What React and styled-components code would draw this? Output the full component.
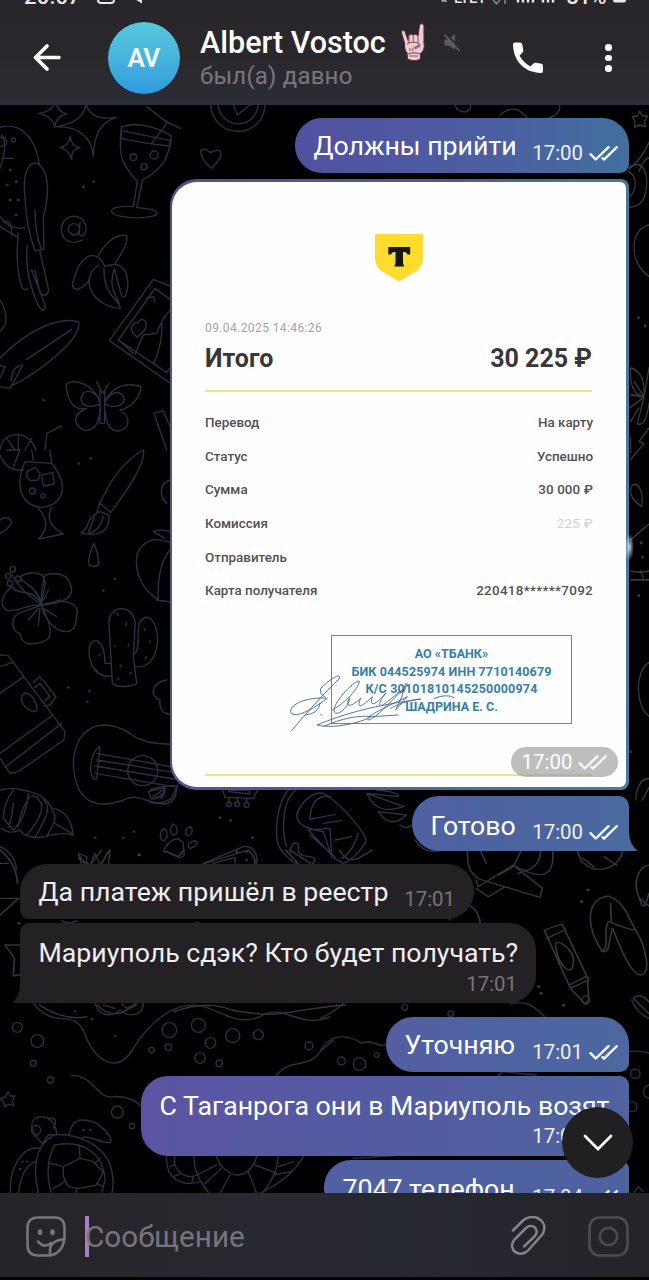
import React from 'react';
import styled, { createGlobalStyle } from 'styled-components';

const Global = createGlobalStyle`
  * { box-sizing: border-box; }
  body { margin: 0; background: #000; }
`;

const Screen = styled.div`
  width: 649px;
  height: 1280px;
  display: flex;
  flex-direction: column;
  background: #000;
  overflow: hidden;
  font-family: Roboto, "Noto Sans", sans-serif;
  white-space: nowrap;
`;

const Top = styled.header`
  height: 105px;
  flex: none;
  display: flex;
  flex-direction: column;
  background: linear-gradient(180deg, #29262a 0%, #28272b 45%, #2c2d35 100%);
  overflow: hidden;
`;

const StatusBar = styled.div`
  height: 6px;
  flex: none;
  display: flex;
  align-items: flex-end;
  justify-content: space-between;
  padding: 0 23px 0 24px;
`;

const StatusGroup = styled.div`
  display: flex;
  align-items: flex-end;
  gap: ${(p) => p.$gap}px;
`;

const StatusText = styled.span`
  font-size: ${(p) => p.$size || 22}px;
  font-weight: 500;
  line-height: 22px;
  height: ${(p) => p.$rise || 20}px;
  letter-spacing: ${(p) => p.$track || 0}px;
  color: ${(p) => p.$color || '#e9e8ec'};
`;

const TitleBar = styled.div`
  display: flex;
  align-items: center;
  height: 99px;
  padding: 5px 0 0 32px;
`;

const Avatar = styled.div`
  width: 72px;
  height: 72px;
  margin: 0 20px 0 46px;
  border-radius: 50%;
  background: linear-gradient(180deg, #55c8dc 0%, #48b4dc 50%, #2f9ae0 100%);
  color: #f4fbff;
  font-size: 26px;
  font-weight: 600;
  letter-spacing: -0.6px;
  padding-right: 1px;
  display: flex;
  align-items: center;
  justify-content: center;
`;

const Peer = styled.div`
  display: flex;
  flex-direction: column;
  width: 312px;
  height: 72px;
  padding-top: 2px;
`;

const PeerName = styled.div`
  display: flex;
  align-items: center;
  height: 37px;
  font-size: 30.5px;
  font-weight: 500;
  color: #fff;
  svg:first-of-type { margin: 0 15px 0 14px; }
`;

const PeerStatus = styled.div`
  font-size: 24px;
  line-height: 31px;
  color: #79787d;
  letter-spacing: 0.2px;
`;

const Dots = styled.div`
  display: flex;
  flex-direction: column;
  gap: 4px;
  margin-left: 61px;
`;

const Dot = styled.i`
  width: 6.5px;
  height: 6.5px;
  border-radius: 50%;
  background: #fff;
`;

const Chat = styled.main`
  position: relative;
  height: 1088px;
  flex: none;
  overflow: hidden;
`;

const Wallpaper = styled.svg`
  position: absolute;
  left: 0;
  top: 0;
`;

const Messages = styled.div`
  position: relative;
  display: flex;
  flex-direction: column;
  padding: 13px 20px 0;
`;

const Bubble = styled.div`
  position: relative;
  align-self: ${(p) => (p.$out ? 'flex-end' : 'flex-start')};
  width: ${(p) => p.$w}px;
  height: ${(p) => p.$h || 55}px;
  margin-bottom: ${(p) => p.$gap}px;
  padding: 0 ${(p) => (p.$out ? 11 : 19)}px 0 18.5px;
  border-radius: ${(p) => p.$radius};
  background: ${(p) => p.$bg || '#242125'};
  display: flex;
  justify-content: ${(p) => (p.$stacked ? 'flex-start' : 'space-between')};
  flex-direction: ${(p) => (p.$stacked ? 'column' : 'row')};
`;

const MessageText = styled.div`
  font-size: 26.7px;
  line-height: 54px;
  height: ${(p) => (p.$stacked ? 42 : 54)}px;
  padding-top: ${(p) => p.$drop || 0}px;
  color: ${(p) => (p.$out ? '#fff' : '#efeef1')};
`;

const Meta = styled.div`
  display: flex;
  align-items: center;
  justify-content: flex-end;
  gap: 6px;
  height: 24px;
  margin-top: ${(p) => p.$top ?? 23}px;
  font-size: 20.4px;
  color: ${(p) => (p.$out ? '#eef0fa' : '#77747a')};
`;

const Tail = styled.svg`
  position: absolute;
  bottom: 0;
  ${(p) => (p.$side === 'right' ? 'right: -9px;' : 'left: -8px;')}
`;

const Photo = styled.div`
  position: relative;
  align-self: flex-end;
  width: 459px;
  height: 611px;
  margin-bottom: 6px;
  padding: 3px 3px 3px 2px;
  border-radius: 27px 8px 8px 27px;
  background: linear-gradient(100deg, #54508f 0%, #4f5c93 50%, #477690 72%, #4d7ba0 100%);
`;

const Glint = styled.i`
  position: absolute;
  right: -5px;
  top: 354px;
  width: 9px;
  height: 28px;
  border-radius: 50%;
  background: radial-gradient(closest-side, rgba(235, 242, 250, 0.85), rgba(235, 242, 250, 0));
`;

const Receipt = styled.div`
  height: 605px;
  border-radius: 25px 6px 6px 25px;
  background: #fefefe;
  display: flex;
  flex-direction: column;
  padding: 52px 34px 0 33px;
  color: #525153;
`;

const Shield = styled.svg`
  align-self: center;
  margin-bottom: 38px;
`;

const ReceiptDate = styled.div`
  font-size: 12px;
  line-height: 17px;
  letter-spacing: 0.4px;
  color: #a3a2a5;
`;

const Total = styled.div`
  display: flex;
  justify-content: space-between;
  height: 53px;
  line-height: 43px;
  font-size: 25px;
  font-weight: 700;
  color: #373638;
`;

const Rule = styled.div`
  height: 2px;
  flex: none;
  background: #e9e785;
`;

const Details = styled.div`
  display: flex;
  flex-direction: column;
  padding-top: 13px;
`;

const DetailRow = styled.div`
  display: flex;
  justify-content: space-between;
  height: 33.67px;
  line-height: 35px;
  font-size: 13.4px;
  font-weight: 500;
  margin-right: -1px;
`;

const DetailValue = styled.span`
  color: ${(p) => (p.$faded ? '#d2d1d4' : 'inherit')};
  font-weight: ${(p) => (p.$faded ? 400 : 500)};
  letter-spacing: ${(p) => p.$track || 0}px;
`;

const Stamp = styled.div`
  position: relative;
  width: 241px;
  height: 89px;
  margin: 28px 0 50px 126px;
  padding-top: 9px;
  border: 1.5px solid #4f8fb0;
  color: #347fab;
  font-size: 12.5px;
  line-height: 17.6px;
  font-weight: 700;
  text-align: center;
`;

const Signature = styled.svg`
  position: absolute;
  left: -43px;
  top: -1px;
`;

const StampLine = styled.div`
  letter-spacing: ${(p) => p.$track || 0}px;
`;

const PhotoMeta = styled.div`
  position: absolute;
  right: 11px;
  bottom: 13px;
  width: 107px;
  height: 30px;
  border-radius: 15px;
  background: rgba(150, 150, 152, 0.62);
  color: #fff;
  font-size: 20.4px;
  display: flex;
  align-items: center;
  justify-content: center;
  gap: 6px;
`;

const ScrollDown = styled.button`
  position: absolute;
  left: 562px;
  top: 1002px;
  width: 71px;
  height: 71px;
  border: 0;
  padding: 0;
  border-radius: 50%;
  background: #202022;
  display: flex;
  align-items: center;
  justify-content: center;
`;

const Composer = styled.footer`
  height: 84px;
  flex: none;
  display: flex;
  align-items: center;
  padding: 2px 20px 0 26px;
  background: linear-gradient(90deg, #262428 0%, #282830 40%, #262831 65%, #242328 100%);
`;

const Caret = styled.i`
  width: 4px;
  height: 41px;
  margin: 0 -4px 0 18px;
  background: #aa7fc6;
`;

const Placeholder = styled.div`
  width: 425px;
  font-size: 29.7px;
  color: #77757b;
`;

const Attach = styled.svg`
  margin-right: 42px;
`;

const Checks = () => (
  <svg width="29" height="17" viewBox="0 0 29 17" fill="none" stroke="#f4f6fc" strokeWidth="2.4" strokeLinecap="round" strokeLinejoin="round">
    <path d="M1.5 9.2 6.8 14.5 19.5 2.2M13.5 13.2 15 14.6 27.8 2.2" />
  </svg>
);

const RockHand = () => (
  <svg width="28" height="39" viewBox="0 0 28 39">
    <path d="M2.5 7.5C4.5 6.5 5 8 5.5 10L8 17 9 12C10 10.5 13 11 13 12.5 14 10.5 17.5 11 18 13L19.5 2C20.5.2 23.5.5 24 2.5L24 20C25 24 24 28 20.5 31V36C17 38.5 11 38 7.5 36L7 30C4 27 4.5 21 4.5 20L1.5 10C1.2 9 1.5 8 2.5 7.5Z" fill="#e9cfd4" stroke="#5e2634" strokeWidth="1.1" />
    <path d="M9 12V20M13.3 13V20M18 13V20M7 21C11 18 18 19 20 22 16 23 13 24 12 28M8 31C13 29 17 30 20 31M15 26 20 23M10 25V28M9 33H18" fill="none" stroke="#985467" strokeWidth="1.1" />
  </svg>
);

const Muted = () => (
  <svg width="18" height="20" viewBox="0 0 18 20">
    <path d="M1.5 6.5H5L12 1V16.5L5 12.5H1.5Z" fill="#5c5a5f" />
    <path d="M3 1 17.5 16.5" stroke="#29282c" strokeWidth="2" />
    <path d="M1.5 1.5 16.5 18" stroke="#615f64" strokeWidth="1.8" />
  </svg>
);

/* Thin-line summer doodles behind the conversation. */
const Doodles = () => (
  <Wallpaper width="649" height="1088" viewBox="0 105 649 1088" fill="none" stroke="url(#ink)" strokeWidth="1.4" strokeLinecap="round" strokeLinejoin="round">
    <defs>
      <linearGradient id="ink" gradientUnits="userSpaceOnUse" x1="0" y1="0" x2="649" y2="0">
        <stop offset="0" stopColor="#292f43" />
        <stop offset="0.5" stopColor="#302d43" />
        <stop offset="1" stopColor="#433540" />
      </linearGradient>
      <linearGradient id="inkWide" gradientUnits="userSpaceOnUse" x1="0" y1="0" x2="1947" y2="0">
        <stop offset="0" stopColor="#292f43" />
        <stop offset="0.5" stopColor="#302d43" />
        <stop offset="1" stopColor="#433540" />
      </linearGradient>
    </defs>
    <g transform="translate(0 100) scale(.33333)" stroke="url(#inkWide)" strokeWidth="4.2">
      <path d="M115 40Q158 38 168 0 170 35 200 42 168 48 164 82 158 48 115 40ZM170 80Q255 65 258 10 270 65 350 52 282 70 280 168 270 80 170 80ZM178 142Q207 140 210 108 214 140 240 143 213 148 215 177 208 150 178 142Z" />
      <path d="M0 82C60 65 105 110 118 190M0 205Q25 135 5 105M0 350Q35 395 75 382M75 290C65 205 95 175 120 195 145 220 150 280 130 350L132 448 105 452Q78 380 75 290ZM105 330Q105 400 125 450M55 400Q45 500 65 560 75 575 83 565M82 435Q75 510 100 580 115 625 128 632 142 625 130 600L95 510M120 455 146 570Q140 595 120 580L105 510M5 175H40M0 380 50 410M10 365Q35 355 35 405" />
      <circle cx="40" cy="120" r="6" /><circle cx="6" cy="125" r="14" />
      <path d="M365 80C420 62 490 90 515 110L508 138Q430 130 363 115ZM365 80C350 180 375 200 412 245L400 320C330 315 310 340 370 350 440 360 500 345 455 328L410 322 428 240C490 205 505 175 515 110M365 92Q430 105 512 122M455 130 502 68 440 20M500 65 540 85" />
      <circle cx="400" cy="172" r="10" /><circle cx="462" cy="165" r="12" /><circle cx="432" cy="200" r="9" />
      <ellipse cx="222" cy="388" rx="17" ry="17" />
      <path d="M240 368 237 400C240 415 260 408 258 382 254 355 235 347 218 349 195 352 184 370 184 390 186 415 205 428 225 427L248 420" />
      <path d="M295 467C320 420 355 400 380 407 385 440 360 460 345 492M315 500C290 445 240 455 217 555 225 585 265 555 270 530M298 495C235 530 275 620 360 625 365 600 310 595 312 505M315 500C375 475 385 530 383 560 378 600 365 600 360 570L343 505C330 545 335 570 358 610" />
      <path d="M540 570 460 538 328 722 540 870M540 620 465 565 355 720 500 818 540 770M355 720 400 760M400 700C385 680 405 665 415 668 420 650 440 660 438 675 440 695 420 700 412 712ZM405 762 430 705 470 700Q500 620 540 620M462 790Q490 720 485 670M440 595 460 590 465 605" />
      <path d="M0 775C80 690 175 650 235 665 250 710 130 810 40 855M80 778 215 688M0 860 30 865Q50 830 68 795 35 800 35 840M0 795 15 800 0 835M0 600Q25 640 15 675L0 695" />
      <path d="M300 905C280 850 220 835 198 853 202 900 220 935 260 925M314 905C335 860 380 845 423 860 420 900 385 925 360 930M260 925C220 940 215 975 255 992 290 990 295 965 302 930M360 930C390 950 395 985 355 993 320 990 320 960 314 930M298 905C290 870 245 860 243 900 250 920 265 925 300 912M316 905C330 875 365 865 373 900 365 920 340 925 316 912M300 870V970H314V870M290 845 307 880 328 850" />
      <path d="M0 1050Q5 1005 55 1003 95 1010 108 1050M55 1003V1050M20 1015 45 1050M95 1015 75 1050M135 1050 140 1000 185 978M462 940 490 932 540 1050M462 940 500 1050M515 965 540 980" />
      <path d="M632 15C640 120 790 120 795 15M654 15C665 90 765 90 775 15M700 15 712 45 750 15M631 158C590 125 595 177 635 205 680 160 665 138 631 158Z" />
      <path d="m250 260 1 1m29-17 1 1M130 900l1 1M30 210h2m16 35h2m-30 10h2m8 45h2m15 45h2m5-45h2" strokeWidth="8" />
    </g>
    <g transform="translate(0 450) scale(.33333)" stroke="url(#inkWide)" strokeWidth="4.2">
      <path d="M0 15Q20 65 70 60M75 35 155 40C220 120 175 170 125 172 50 165 50 90 75 35M20 0 60 0 40 50M95 0 100 30M150 0 155 40M115 175Q160 225 115 267L190 252Q130 220 155 172M82 65 105 52 120 70 115 90 92 92 80 80ZM125 75 158 68 163 102 130 108Z" />
      <circle cx="97" cy="123" r="9" /><circle cx="129" cy="137" r="6" />
      <path d="M300 160Q350 45 430 0 440 45 330 190M300 160 330 185M300 185C255 200 270 240 243 248 300 265 335 235 325 195ZM300 155 290 190M285 195 265 248M310 200Q300 240 270 250M282 280Q260 330 268 345 290 355 297 340 295 310 282 280Z" />
      <path d="M125 465C100 410 55 440 35 410 0 440 0 465 18 480 45 490 90 460 125 465ZM125 465C110 400 65 405 62 380 90 360 120 370 130 380 145 405 125 430 125 465ZM125 465C120 430 130 400 135 375 180 365 200 375 210 400 230 445 185 460 125 465ZM125 465C190 445 230 455 232 485 225 510 235 540 200 545 160 545 130 500 125 465ZM125 465C150 520 165 565 130 575 80 590 65 580 60 550 35 545 30 505 55 490ZM125 465Q60 420 35 375M95 410 125 455M145 420 130 450M180 450 140 465M170 500 130 475M115 525 120 475M85 510 115 475" />
      <circle cx="38" cy="358" r="8" /><circle cx="24" cy="378" r="8" /><circle cx="54" cy="386" r="8" /><circle cx="30" cy="400" r="8" />
      <path d="M337 700 327 520C325 460 410 460 405 530L400 620 410 700C400 710 350 715 337 700ZM405 610C420 600 410 550 418 520 435 485 470 500 473 570 470 630 440 655 405 650M335 680C270 680 265 620 268 590 280 555 315 570 315 640L332 640" />
      <path d="M0 615 25 617 195 845 192 870 55 965 30 970 0 925M0 650 38 637M0 730 72 680M100 697 120 680 168 740 150 765 134 768M105 712 120 700 150 740 135 752M0 910 158 795M20 948 185 820" />
      <path d="M65 745C65 720 90 725 105 755 120 785 105 795 75 770Q65 760 65 745Z" />
      <path d="M540 885C490 880 430 885 390 850 300 795 225 835 220 940 225 1070 300 1075 370 1050 430 1020 450 1085 515 1045L540 990M300 890C270 900 260 990 290 988ZM290 910 540 955M290 930 540 970M285 948 540 990M285 970 520 1010M445 1025 495 1012Q490 1045 455 1047Z" />
      <circle cx="428" cy="962" r="45" />
      <path d="M0 1020Q35 1010 65 1020 135 1030 155 1075 210 1080 220 1155 180 1145 135 1160 80 1170 60 1140 30 1155 5 1135M40 1020Q10 1060 10 1105L40 1140Q80 1100 85 1030M90 1040Q60 1080 55 1130M95 1035C150 1055 120 1110 80 1155M130 1050C160 1070 130 1120 105 1162M155 1080C180 1100 150 1140 140 1160M215 1150 165 1120M40 1060Q35 1110 25 1130M0 1190Q45 1210 50 1260" />
      <path d="M500 160C480 145 475 100 510 90M475 450C400 400 395 310 430 285 460 260 485 265 540 290M495 265 460 245Q475 235 510 245M475 450Q470 350 510 300M470 450 540 460M0 210Q20 195 35 215 25 240 0 250M500 690C450 700 450 740 480 750 475 800 520 800 540 780M235 1210 260 1220 260 1260M245 1245 235 1210M270 1250 285 1210 300 1245 330 1200 325 1250" />
      <path d="m236 40 1 1m35-16 1 1m71 360 1 1m-35 34 1 1M205 712l1 1m62 10 1 1m-7 31 1 1M285 1163l1 1m84-1 1 1m31-20 1 1m14 68 1 1" strokeWidth="7" />
      <path d="m350 490 5 6m25 22-2 8M345 588h2m40-6-3 8m-24 54 4 6m-13 38 6-4m32-13 5-4m-42-95M432 535l3 6m15 30v8m-15 47 4-6m-142-2 3-4m-15 46 8 3" />
      <path d="M485 1140C500 1125 510 1170 490 1172 478 1170 480 1150 485 1140ZM520 1122C535 1130 535 1155 520 1155 508 1150 510 1130 520 1122ZM570 1130C585 1140 570 1165 558 1155 555 1145 560 1135 570 1130ZM575 1175C595 1165 600 1185 570 1195 560 1190 565 1180 575 1175ZM490 1205C500 1180 530 1150 550 1180 545 1200 565 1220 540 1222 525 1220 515 1205 490 1205Z" />
    </g>
    <g transform="translate(150 780) scale(.33333)" strokeWidth="4.2" stroke="#30304a">
      <path d="M0 30Q65 10 80 20 80 65 45 72L0 68M10 50 45 25Q45 50 30 55M218 30 225 52 310 55 323 30M237 30H300V42L237 35ZM237 52V68M262 52V65M290 55V68" />
      <circle cx="237" cy="73" r="7" /><circle cx="262" cy="73" r="7" /><circle cx="290" cy="75" r="7" />
      <path d="M415 30C380 70 370 170 390 205Q410 235 445 255M438 30C395 60 395 160 410 200M530 45C500 25 455 60 440 105 440 135 475 148 520 155L545 230 580 250C610 240 640 200 648 185 650 160 580 80 530 45ZM480 120C480 70 500 45 540 50M475 150 540 145 545 225ZM480 165 555 230M625 160Q605 220 575 235M480 118 555 103M520 130 575 122M555 180 605 170M420 215C425 180 450 180 445 210 450 240 490 220 495 240L485 255M650 40C680 110 740 85 762 80L650 40 745 50Q745 35 680 30M685 95Q720 150 770 105L685 95M750 135Q775 155 805 120M160 250 280 200C310 195 325 225 320 250M190 250 255 232V250" />
      <path d="M210 113h1m30 8h1m65 52h1m-48 42h1m28 0h1m-1 25h1" strokeWidth="8" />
    </g>
    <g transform="translate(0 1000) scale(.33333)" stroke="url(#inkWide)" strokeWidth="4.2">
      <path d="M100 10C165 90 210 25 250 90 280 180 350 230 400 145 440 80 520-5 610 20 660 30 710 80 780 50 850 5 900 90 990 50M213 226C285 225 290 300 340 290Q390 285 425 320M825 230C870 170 925 210 960 155L1000 120M285 10C300 60 350 45 360 30 390 55 430 45 430 10M310 15 345 25M365 10 380 25 410 10" />
      <circle cx="52" cy="82" r="15" /><circle cx="112" cy="123" r="19" /><circle cx="100" cy="190" r="9" /><circle cx="151" cy="240" r="9" /><circle cx="352" cy="336" r="18" /><circle cx="396" cy="378" r="8" />
      <circle cx="508" cy="90" r="22" /><circle cx="595" cy="76" r="21" /><circle cx="631" cy="129" r="16" /><circle cx="698" cy="107" r="21" /><circle cx="775" cy="104" r="15" /><circle cx="455" cy="150" r="8" /><circle cx="505" cy="142" r="10" /><circle cx="600" cy="174" r="16" /><circle cx="658" cy="190" r="10" /><circle cx="927" cy="138" r="12" />
      <path d="m25 276 6 12h14l-8 14 5 15-17-4-12 8-2-15-11-9 14-6Z" />
      <path d="M128 430C80 390 90 350 125 350 165 355 170 390 170 405L145 405ZM208 405C215 350 250 355 290 370 330 400 340 425 330 428 300 430 260 400 245 415M145 355C170 350 170 370 160 385M145 405C240 395 330 440 338 530Q342 570 330 600M155 410C105 440 95 500 120 600M165 600C140 560 135 480 165 435 245 420 310 455 315 540L300 600M120 445C65 435 25 510 32 580M105 485C70 500 60 540 52 600M190 500 240 475 280 485 310 515 290 555 235 565 205 560 190 530ZM240 475 238 435M285 490 300 475M190 500 150 490M195 545 160 565M230 565 225 590M290 550 310 560" />
      <circle cx="108" cy="390" r="14" />
      <path d="M500 470C495 540 550 560 600 545M525 470C515 520 570 545 600 520M510 500 525 495M520 530 545 520M575 550 580 530M582 470C580 530 620 580 690 640M835 470C830 530 800 570 750 620M600 520 650 495M650 470C660 500 685 525 715 525 750 520 765 490 770 470M765 495 830 520M665 505 615 550M690 525 655 590M745 515 770 580M910 470C880 520 840 550 780 580M820 525 875 515M835 500 880 485" />
      <path d="M225 34h1m49 23h1m69 51h1M250 390h1m20 0h1m-205 95h1m12 0h1m-22 22h1" strokeWidth="7" />
    </g>
    <g transform="translate(320 1000) scale(.33333)" strokeWidth="4.2" stroke="#302c40">
      <path d="M0 155C35 90 95 110 125 130 155 115 180 145 200 135M0 55Q40 40 70 10M570 10C630 0 645 25 675 50M925 155Q960 150 987 160M935 0Q950 40 987 55M530 230 550 215 650 225M970 575 955 560 940 580M100 475 250 465" />
      <circle cx="64" cy="183" r="12" /><circle cx="119" cy="192" r="19" /><circle cx="170" cy="165" r="7" /><circle cx="254" cy="22" r="9" /><circle cx="392" cy="41" r="8" /><circle cx="946" cy="221" r="14" /><circle cx="990" cy="275" r="20" /><circle cx="936" cy="320" r="15" /><circle cx="798" cy="0" r="12" />
    </g>
    <g transform="translate(0 850) scale(.4139 .33333)" strokeWidth="4" stroke="#3e3340">
      <path d="M190 25 215 42M190 15 205 42M220 42 245 0M245 42 265 0M150 212Q165 225 185 212M48 285 12 285 35 325 32 378 48 375M1130 0Q1125 75 1165 90L1305 142 1310 115 1240 45 1155 110 1150 90M1160 0 1175 40M1205 75 1240 50 1260 0M1250 70Q1310 55 1305 0M1240 45Q1345 120 1335 0" stroke="#39313e" />
      <path d="M1395 0C1405 80 1495 75 1505 0M1408 25 1435 50M1490 45 1460 20M1150 115 1180 140 1220 110M1455 305C1410 220 1420 145 1470 138 1510 155 1520 210 1535 238 1525 245 1485 220 1470 215 1455 240 1475 285 1455 305ZM1477 215 1475 160M1455 305C1475 310 1470 270 1480 235 1510 330 1530 375 1548 375 1575 370 1560 290 1535 238M1580 45C1535 40 1530 110 1545 145 1555 190 1560 165 1568 130M1545 145 1580 180" />
      <path d="M1315 240 1358 222 1422 390 1378 415ZM1320 265 1365 240M1375 405 1415 380M1380 418 1415 463 1422 450 1420 390M1343 295C1335 255 1380 290 1385 325 1390 390 1350 355 1343 295ZM95 465Q160 515 210 500M420 485Q500 450 560 480C690 510 680 480 835 465M235 465Q255 495 290 490L330 465M1085 210 1100 175Q1130 160 1145 175 1160 200 1160 220M700 0 750 40M690 0 720 40M820 0Q840 40 865 25L900 0M400 5 430 20 445 0M490 42 600 0Q620 25 615 42M1530 445Q1550 420 1580 475M1530 445 1580 505M0 40H20M0 145 45 145 0 195M0 0Q40 40 42 100" />
      <path d="M1405 155h1m14-35h1m-120 290h1m5 20h1m53 36h1M336 15h1M45 220h1m430 0h1" strokeWidth="8" />
    </g>
    <g transform="translate(619 100) scale(.33333 .44643)" strokeWidth="3.6" stroke="#43363e">
      <path d="m62 25 8 10 15 1-9 12 3 12-17-4-15 5 1-14-8-9 15-2ZM30 155Q65 135 90 95M28 160C60 170 50 210 32 215M30 150C75 130 90 170 80 205 75 235 45 240 30 240M60 160Q75 130 90 130M90 280C30 290 30 365 90 395M35 600Q80 610 75 665 30 660 35 600M75 665 45 630M75 665 90 600M75 665 35 660M75 665 55 725Q80 735 90 680M32 690 75 665M35 720 60 690M35 755V790M90 735 60 765 75 770 35 805M38 865Q25 890 68 910 75 880 55 862 38 860 38 865ZM35 985 90 950M35 1055Q60 1060 90 1055M35 1075H90M65 1055 75 1075M90 1260C45 1280 50 1360 90 1380M50 1568Q55 1520 90 1520M70 1568 90 1540" />
      <path d="M58 488h1m19 18h1M66 992h1m3 32h1m-12 86h1m-26 350h1" strokeWidth="7" />
    </g>
    <path d="M415 840Q425 855 440 850M560 105Q560 115 549 118M455 105Q457 112 466 112 470 110 471 105M500 115Q515 102 527 118" stroke="#39313e" />
  </Wallpaper>
);

const outRound = '27px 27px 9px 27px';
const details = [
  { label: 'Перевод', value: 'На карту' },
  { label: 'Статус', value: 'Успешно' },
  { label: 'Сумма', value: '30 000 ₽', track: 0.1 },
  { label: 'Комиссия', value: '225 ₽', faded: true, track: 0.3 },
  { label: 'Отправитель', value: '' },
  { label: 'Карта получателя', value: '220418******7092', track: 0.32 },
];

export default function App() {
  return (
    <Screen>
      <Global />
      <Top>
        <StatusBar>
          <StatusGroup $gap={16}>
            <StatusText $track={0.2}>20:07</StatusText>
            <svg width="50" height="6" viewBox="0 0 50 6" fill="none" stroke="#e9e8ec" strokeWidth="2"><path d="M1 -3V0Q1 3 4 3H14Q17 3 17 0V-3" /><path d="M36 -2 45 3.5V-2Z" fill="#e9e8ec" stroke="none" /></svg>
          </StatusGroup>
          <StatusGroup $gap={7}>
            <StatusText $size={15} $rise={19} $track={-0.3}>«&nbsp; LTE1</StatusText>
            <svg width="16" height="6" viewBox="0 0 16 6" fill="none" stroke="#858389" strokeWidth="1.6"><path d="M1 0 4.5 3.5 8 0M13 -2V4" /></svg>
            <svg width="44" height="6" viewBox="0 0 44 6" stroke="#e9e8ec" strokeWidth="2.4"><path d="M3 -1V2.5M8 -1V2.5M13 -1V2.5M18 -1V2.5M28 -1V2.5M33 -1V2.5M38 -1V2.5" /></svg>
            <StatusText $track={-0.5}>81%</StatusText>
            <svg width="13" height="6" viewBox="0 0 13 6"><path d="M0 -3H13V0Q13 2.5 11 2.5H2Q0 2.5 0 0Z" fill="#e9e8ec" /></svg>
          </StatusGroup>
        </StatusBar>
        <TitleBar>
          <svg width="30" height="28" viewBox="0 0 30 28" fill="none" stroke="#fff" strokeWidth="3.6" strokeLinecap="round" strokeLinejoin="round"><path d="M27 13.5H4M15 2 3.5 13.5 15 25" /></svg>
          <Avatar>AV</Avatar>
          <Peer>
            <PeerName>Albert Vostoc<RockHand /><Muted /></PeerName>
            <PeerStatus>был(а) давно</PeerStatus>
          </Peer>
          <svg width="32" height="32" viewBox="0 0 32 32"><path d="M1 2.5Q1 .5 2.8 .5H8Q9.8 .5 10.3 2.5L11.3 8.2Q11.5 9.5 10.5 10.5L7.5 13.7Q11.5 20.5 18.3 24.5L21.5 21.5Q22.5 20.5 24 20.8L29.5 21.8Q31 22.2 31 24V29.2Q31 31 29.2 31C12 30.5 1.5 19 1 2.5Z" fill="#fff" /></svg>
          <Dots><Dot /><Dot /><Dot /></Dots>
        </TitleBar>
      </Top>
      <Chat>
        <Doodles />
        <Messages>
          <Bubble $out $w={334} $gap={6} $radius={outRound} $bg="linear-gradient(90deg, #5150a0 0%, #4c5fa2 60%, #41709e 100%)">
            <MessageText $out $drop={1}>Должны прийти</MessageText>
            <Meta $out>17:00<Checks /></Meta>
          </Bubble>
          <Photo>
            <Receipt>
              <Shield width="48" height="48" viewBox="0 0 48 48">
                <path d="M0 0H48V23C48 30 45.5 34.5 40 38L24 47.5 8 38C2.5 34.5 0 30 0 23Z" fill="#fddc2e" />
                <path d="M13.3 13H35.2V20.5H32.5Q32 18 29.5 18H28V29L29.2 32.5H19.3L20.5 29V18H19Q16.5 18 16 20.5H13.3Z" fill="#171512" />
              </Shield>
              <ReceiptDate>09.04.2025 14:46:26</ReceiptDate>
              <Total><span>Итого</span><span>30 225 ₽</span></Total>
              <Rule />
              <Details>
                {details.map((d) => (
                  <DetailRow key={d.label}><span>{d.label}</span><DetailValue $faded={d.faded} $track={d.track}>{d.value}</DetailValue></DetailRow>
                ))}
              </Details>
              <Stamp>
                <StampLine>АО «ТБАНК»</StampLine>
                <StampLine $track={0.12}>БИК 044525974 ИНН 7710140679</StampLine>
                <StampLine $track={0.2}>К/С 30101810145250000974</StampLine>
                <StampLine>ШАДРИНА Е. С.</StampLine>
                <Signature width="175" height="100" viewBox="55 100 525 300" fill="none" stroke="#466c98" strokeWidth="2.8" strokeLinecap="round">
                  <path d="M62 388C110 330 170 265 205 232 215 210 180 230 150 260 145 285 170 285 165 290 130 285 60 300 60 330 65 355 125 325 170 290M105 340Q145 335 148 305M150 338 153 341M185 325C230 300 270 250 265 238 250 235 170 320 195 335 225 335 245 280 235 290 220 320 245 315 270 290 255 325 275 315 305 285 295 315 310 315 345 275 320 305 320 325 350 300L400 260C350 310 320 345 295 355 270 350 350 315 410 285L375 325Q395 290 405 245M140 370C220 335 320 310 450 292 390 300 370 315 360 320M140 370C200 385 290 355 300 345 270 340 210 350 160 374M300 345 382 340M490 290Q530 275 550 288M410 245 400 270" />
                </Signature>
              </Stamp>
              <Rule />
            </Receipt>
            <PhotoMeta>17:00<Checks /></PhotoMeta>
            <Glint />
          </Photo>
          <Bubble $out $w={217} $gap={13} $radius="27px 10px 0 27px" $bg="linear-gradient(90deg, #5061a2 0%, #4b659f 65%, #496b9f 100%)">
            <MessageText $out $drop={3}>Готово</MessageText>
            <Meta $out $top={24}>17:00<Checks /></Meta>
            <Tail $side="right" width="10" height="20" viewBox="0 0 10 20"><path d="M0 0H1Q1 14 10 20H0Z" fill="#496b9f" /></Tail>
          </Bubble>
          <Bubble $w={454} $gap={4} $radius="27px 27px 27px 9px">
            <MessageText $drop={1}>Да платеж пришёл в реестр</MessageText>
            <Meta>17:01</Meta>
          </Bubble>
          <Bubble $stacked $w={516} $h={80} $gap={14} $radius="9px 27px 27px 0">
            <MessageText $stacked $drop={3}>Мариуполь сдэк? Кто будет получать?</MessageText>
            <Meta $top={7}>17:01</Meta>
            <Tail $side="left" width="9" height="20" viewBox="0 0 9 20"><path d="M9 0H8Q8 14 0 20H9Z" fill="#242125" /></Tail>
          </Bubble>
          <Bubble $out $w={243} $gap={4} $radius={outRound} $bg="linear-gradient(90deg, #545ea1 0%, #4e64a2 50%, #4d679f 100%)">
            <MessageText $out $drop={1}>Уточняю</MessageText>
            <Meta $out>17:01<Checks /></Meta>
          </Bubble>
          <Bubble $stacked $out $w={488} $h={80} $gap={4} $radius="27px 9px 9px 27px" $bg="linear-gradient(90deg, #5b54a3 0%, #545ba1 45%, #4e639f 100%)">
            <MessageText $stacked $out $drop={3}>С Таганрога они в Мариуполь возят</MessageText>
            <Meta $out $top={6}>17:02<Checks /></Meta>
          </Bubble>
          <Bubble $out $w={305} $gap={0} $radius="27px 9px 0 27px" $bg="linear-gradient(90deg, #5160a2 0%, #4d639f 100%)">
            <MessageText $out $drop={2}>7047 телефон</MessageText>
            <Meta $out $top={25}>17:04<Checks /></Meta>
          </Bubble>
        </Messages>
        <ScrollDown>
          <svg width="32" height="20" viewBox="0 0 32 20" fill="none" stroke="#fff" strokeWidth="2.8" strokeLinecap="round"><path d="m3 3 13 13L29 3" /></svg>
        </ScrollDown>
      </Chat>
      <Composer>
        <svg width="41" height="41" viewBox="0 0 41 41" fill="none" stroke="#77757a" strokeWidth="2.6" strokeLinecap="round" strokeLinejoin="round">
          <path d="M38.5 23V12Q38.5 1.5 29 1.5H12Q1.5 1.5 1.5 12V29Q1.5 39.5 12 39.5H24Q36 37.5 38.5 23ZM24 39.5V33Q24.5 25 38.5 23M12 25.5Q18 33 25 27" />
          <path d="M14 15.5V17M26.5 15.5V17" strokeWidth="4.5" />
        </svg>
        <Caret />
        <Placeholder>Сообщение</Placeholder>
        <Attach width="36" height="40" viewBox="0 0 36 40" fill="none" stroke="#85848b" strokeWidth="2.5" strokeLinecap="round"><path d="M3 14.5 13 4.5C22-3.5 39 3 33 17.5L18.5 34C10 43-3 34 4 24L15.5 12.5C22 6 30 13 25 20L14 30.5" /></Attach>
        <svg width="41" height="41" viewBox="0 0 41 41" fill="none" stroke="#4d4b51" strokeWidth="2.7"><rect x="1.5" y="1.5" width="38" height="38" rx="10" /><circle cx="20.5" cy="20.5" r="8.7" /></svg>
      </Composer>
    </Screen>
  );
}
